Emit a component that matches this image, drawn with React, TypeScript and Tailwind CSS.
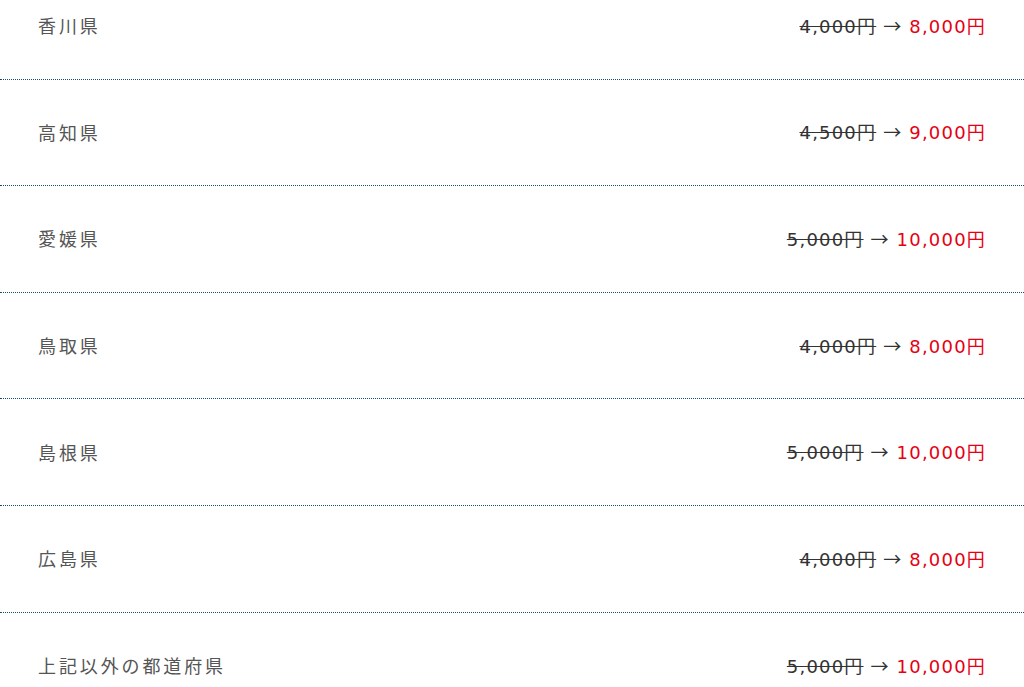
const rows = [
  { name: "香川県", before: "4,000円", after: "8,000円" },
  { name: "高知県", before: "4,500円", after: "9,000円" },
  { name: "愛媛県", before: "5,000円", after: "10,000円" },
  { name: "鳥取県", before: "4,000円", after: "8,000円" },
  { name: "島根県", before: "5,000円", after: "10,000円" },
  { name: "広島県", before: "4,000円", after: "8,000円" },
  { name: "上記以外の都道府県", before: "5,000円", after: "10,000円" },
];

export default function App() {
  return (
    <div className="bg-white w-[1024px] h-[687px] overflow-hidden font-['Noto_Sans_CJK_JP',sans-serif] text-[18px]">
      <div className="-mt-[27px]">
        {rows.map((r, i) => (
          <div
            key={r.name}
            className={
              i < rows.length - 1
                ? "h-[106.6px] flex items-center justify-between pl-[38px] pr-[38px] border-b border-dotted border-[#15506a]"
                : "h-[106.6px] flex items-center justify-between pl-[38px] pr-[38px]"
            }
          >
            <span className="text-[#555555] tracking-[0.16em]">{r.name}</span>
            <span className="text-[#333333] tracking-[1.2px] font-['DejaVu_Sans','Noto_Sans_CJK_JP',sans-serif]">
              <span className="line-through decoration-[#333333]">{r.before}</span>
              {" "}
              <span className="font-['Noto_Sans_CJK_JP',sans-serif]">→</span>
              {" "}
              <span className="text-[#e60012]">{r.after}</span>
            </span>
          </div>
        ))}
      </div>
    </div>
  );
}
